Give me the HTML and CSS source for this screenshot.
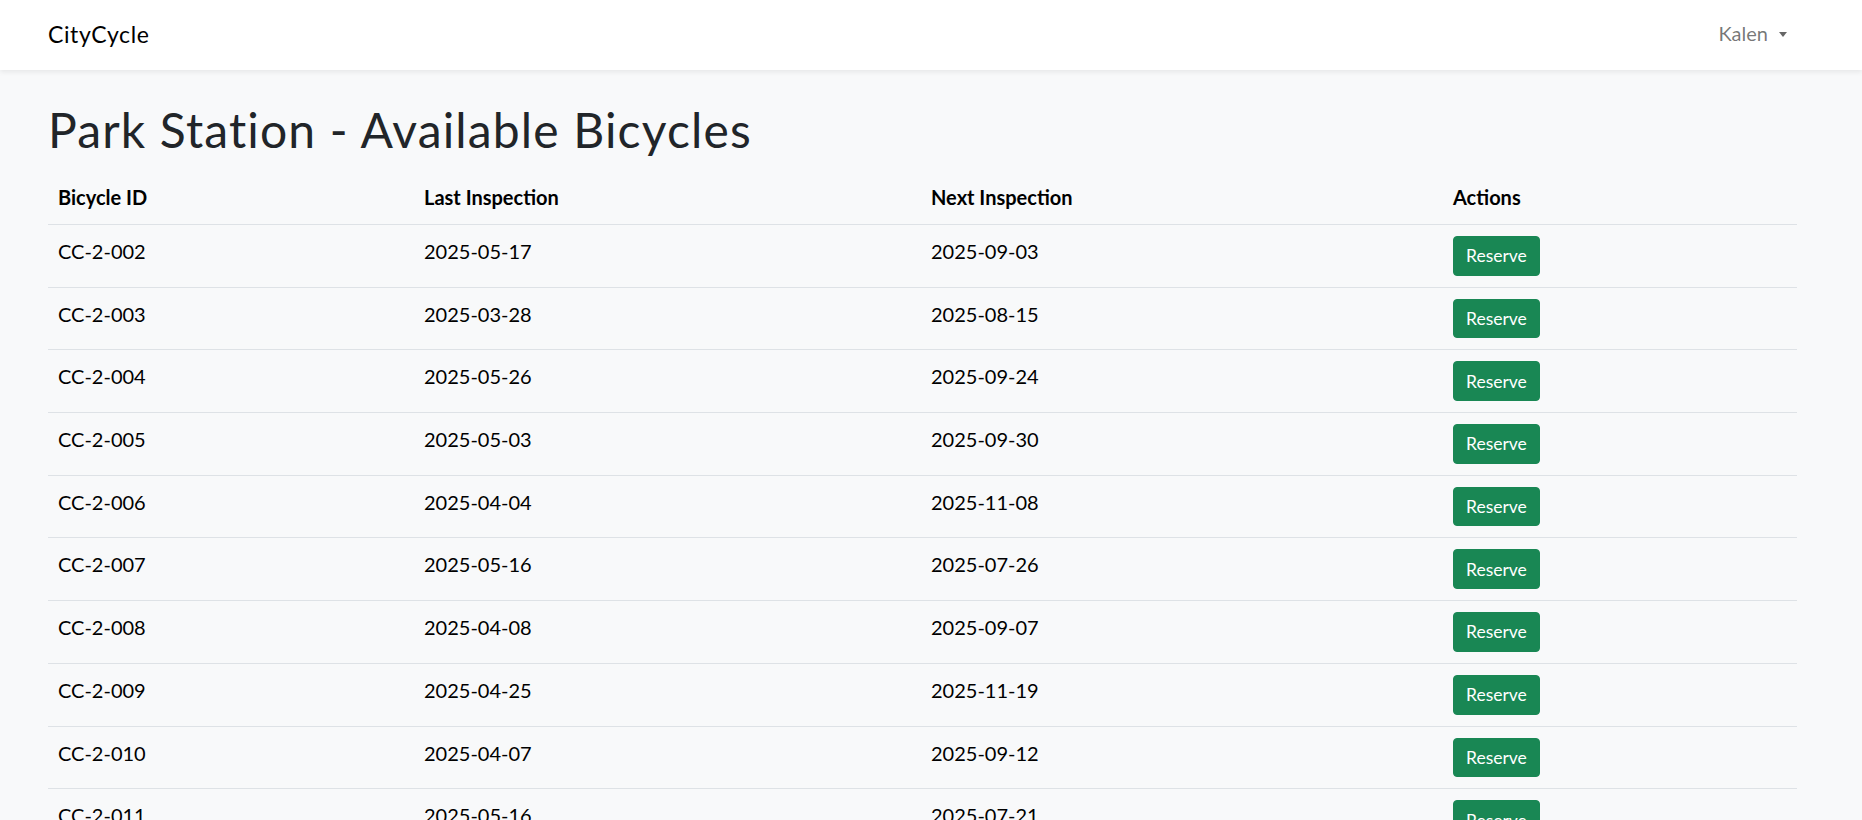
FILE: index.html
```html
<!DOCTYPE html>
<html lang="en">
<head>
<meta charset="utf-8">
<title>CityCycle - Park Station</title>
<link rel="stylesheet" href="styles.css">
</head>
<body>
<nav class="navbar">
  <a class="brand" href="#">CityCycle</a>
  <a class="user-toggle" href="#">Kalen<span class="caret"></span></a>
</nav>
<main class="page">
  <h1 class="title">Park Station - Available Bicycles</h1>
  <table class="bikes">
    <thead>
      <tr>
        <th class="c-id">Bicycle ID</th>
        <th class="c-last">Last Inspection</th>
        <th class="c-next">Next Inspection</th>
        <th class="c-act">Actions</th>
      </tr>
    </thead>
    <tbody>
      <tr><td>CC-2-002</td><td>2025-05-17</td><td>2025-09-03</td><td><button class="btn-reserve">Reserve</button></td></tr>
      <tr><td>CC-2-003</td><td>2025-03-28</td><td>2025-08-15</td><td><button class="btn-reserve">Reserve</button></td></tr>
      <tr><td>CC-2-004</td><td>2025-05-26</td><td>2025-09-24</td><td><button class="btn-reserve">Reserve</button></td></tr>
      <tr><td>CC-2-005</td><td>2025-05-03</td><td>2025-09-30</td><td><button class="btn-reserve">Reserve</button></td></tr>
      <tr><td>CC-2-006</td><td>2025-04-04</td><td>2025-11-08</td><td><button class="btn-reserve">Reserve</button></td></tr>
      <tr><td>CC-2-007</td><td>2025-05-16</td><td>2025-07-26</td><td><button class="btn-reserve">Reserve</button></td></tr>
      <tr><td>CC-2-008</td><td>2025-04-08</td><td>2025-09-07</td><td><button class="btn-reserve">Reserve</button></td></tr>
      <tr><td>CC-2-009</td><td>2025-04-25</td><td>2025-11-19</td><td><button class="btn-reserve">Reserve</button></td></tr>
      <tr><td>CC-2-010</td><td>2025-04-07</td><td>2025-09-12</td><td><button class="btn-reserve">Reserve</button></td></tr>
      <tr><td>CC-2-011</td><td>2025-05-16</td><td>2025-07-21</td><td><button class="btn-reserve">Reserve</button></td></tr>
    </tbody>
  </table>
</main>
</body>
</html>
```
FILE: styles.css
```css
html, body {
  margin: 0;
  padding: 0;
  overflow: hidden;
}
body {
  background: #f8f9fa;
  font-family: Lato, "Noto Sans", sans-serif;
  font-size: 20px;
  line-height: 30px;
  color: #212529;
}
.navbar {
  height: 70px;
  background: #ffffff;
  box-shadow: 0 2px 5px rgba(0, 0, 0, 0.075);
  display: flex;
  align-items: center;
  justify-content: space-between;
  padding: 0 65px 0 48px;
  box-sizing: border-box;
  position: relative;
}
.brand {
  color: #000;
  text-decoration: none;
  font-size: 23px;
  letter-spacing: 0.6px;
  line-height: 30px;
  margin-top: -2px;
}
.user-toggle {
  color: rgba(0, 0, 0, 0.55);
  text-decoration: none;
  font-size: 20px;
  display: flex;
  align-items: center;
  padding: 0 10px;
  margin-top: -4px;
}
.caret {
  display: inline-block;
  margin-left: 11px;
  width: 0;
  height: 0;
  border-top: 5px solid rgba(0, 0, 0, 0.6);
  border-left: 4.8px solid transparent;
  border-right: 4.8px solid transparent;
  margin-top: 2px;
}
.page {
  padding: 0 65px 0 48px;
}
.title {
  margin: 32px 0 12px;
  font-size: 48px;
  line-height: 56px;
  font-weight: 400;
  letter-spacing: 1.15px;
  color: #212529;
}
.bikes {
  width: 100%;
  table-layout: fixed;
  border-collapse: collapse;
  color: #000;
}
.bikes th,
.bikes td {
  text-align: left;
  vertical-align: top;
  padding: 11px 10px;
  border-bottom: 1px solid #dee2e6;
}
.bikes th {
  font-weight: 700;
  padding: 12px 10px 12px;
}
.c-id { width: 346px; }
.c-last { width: 487px; }
.c-next { width: 502px; }
.c-act { width: auto; }
.btn-reserve {
  display: block;
  height: 39.7px;
  padding: 0 12px;
  background: #198754;
  border: 1px solid #198754;
  border-radius: 4px;
  color: #fff;
  font-family: Lato, "Noto Sans", sans-serif;
  font-size: 17.5px;
  line-height: 37px;
  cursor: pointer;
}
```
